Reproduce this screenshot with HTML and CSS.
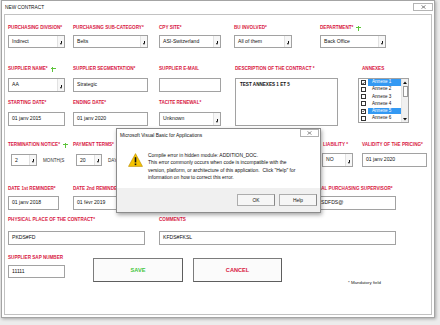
FILE: index.html
```html
<!DOCTYPE html>
<html>
<head>
<meta charset="utf-8">
<link rel="stylesheet" href="styles.css">
</head>
<body>
<div class="window">
  <div class="titlebar">
    <span class="title">NEW CONTRACT</span>
    <span class="close-btn"><svg width="5" height="4" viewBox="0 0 5 4"><path d="M0.5 0.5 L4.5 3.5 M4.5 0.5 L0.5 3.5" stroke="#555" stroke-width="0.7"/></svg></span>
  </div>
  <div class="form">
    <!-- row 1 -->
    <div class="lbl r-l1 c-a">PURCHASING DIVISION*</div>
    <div class="lbl r-l1 c-b">PURCHASING SUB-CATEGORY*</div>
    <div class="lbl r-l1 c-c">CPY SITE*</div>
    <div class="lbl r-l1 c-d nudge-l">BU INVOLVED*</div>
    <div class="lbl r-l1 c-ef">DEPARTMENT* <span class="plus"></span></div>

    <div class="ctl sel r-c1 c-a w57">Indirect<span class="arr"></span></div>
    <div class="ctl sel r-c1 c-b w75">Belts<span class="arr"></span></div>
    <div class="ctl sel r-c1 c-c w62">ASI-Switzerland<span class="arr"></span></div>
    <div class="ctl sel r-c1 c-d w58 nudge-l">All of them<span class="arr"></span></div>
    <div class="ctl sel r-c1 c-ef w66">Back Office<span class="arr"></span></div>

    <!-- row 2 -->
    <div class="lbl r-l2 c-a">SUPPLIER NAME* <span class="plus"></span></div>
    <div class="lbl r-l2 c-b">SUPPLIER SEGMENTATION*</div>
    <div class="lbl r-l2 c-c">SUPPLIER E-MAIL</div>
    <div class="lbl r-l2 c-de">DESCRIPTION OF THE CONTRACT *</div>
    <div class="lbl r-l2 c-f in4">ANNEXES</div>

    <div class="ctl sel r-c2 c-a w57">AA<span class="arr"></span></div>
    <div class="ctl r-c2 c-b w75">Strategic</div>
    <div class="ctl r-c2 c-c w62"></div>
    <div class="ctl textarea r-desc c-de">TEST ANNEXES 1 ET 5</div>
    <div class="listbox r-desc c-f">
      <div class="lb-items">
        <div class="lb-row"><span class="cbox on"><svg width="4" height="4" viewBox="0 0 4 4"><path d="M0.4 2 L1.6 3.3 L3.6 0.6" fill="none" stroke="#111" stroke-width="0.8"/></svg></span><span class="lb-text sel-row">Annexe 1</span></div>
        <div class="lb-row"><span class="cbox"></span><span class="lb-text">Annexe 2</span></div>
        <div class="lb-row"><span class="cbox"></span><span class="lb-text">Annexe 3</span></div>
        <div class="lb-row"><span class="cbox"></span><span class="lb-text">Annexe 4</span></div>
        <div class="lb-row"><span class="cbox on"><svg width="4" height="4" viewBox="0 0 4 4"><path d="M0.4 2 L1.6 3.3 L3.6 0.6" fill="none" stroke="#111" stroke-width="0.8"/></svg></span><span class="lb-text sel-row">Annexe 5</span></div>
        <div class="lb-row"><span class="cbox"></span><span class="lb-text">Annexe 6</span></div>
      </div>
      <div class="lb-scroll">
        <span class="sb-btn"><svg width="4" height="3" viewBox="0 0 4 3"><path d="M0 3 L2 0.5 L4 3 Z" fill="#111"/></svg></span>
        <span class="sb-thumb"></span>
        <span class="sb-track"></span>
        <span class="sb-btn"><svg width="4" height="3" viewBox="0 0 4 3"><path d="M0 0 L2 2.5 L4 0 Z" fill="#111"/></svg></span>
      </div>
    </div>

    <!-- row 3 -->
    <div class="lbl r-l3 c-a">STARTING DATE*</div>
    <div class="lbl r-l3 c-b">ENDING DATE*</div>
    <div class="lbl r-l3 c-c">TACITE RENEWAL*</div>

    <div class="ctl r-c3 c-a w57">01 janv 2015</div>
    <div class="ctl r-c3 c-b w75">01 janv 2020</div>
    <div class="ctl sel r-c3 c-c w62">Unknown<span class="arr"></span></div>

    <!-- row 4 -->
    <div class="lbl r-l4 c-a">TERMINATION NOTICE* <span class="plus"></span></div>
    <div class="lbl r-l4 c-b">PAYMENT TERMS*</div>
    <div class="lbl r-l4 c-e in3">LIABILITY *</div>
    <div class="lbl r-l4 c-f in4">VALIDITY OF THE PRICING*</div>

    <div class="inline-ctl r-c4 c-a">
      <div class="ctl sel small w26">2<span class="arr"></span></div>
      <span class="unit">MONTH(S</span>
    </div>
    <div class="inline-ctl r-c4 c-b">
      <div class="ctl sel small w26">20<span class="arr"></span></div>
      <span class="unit">DAYS</span>
    </div>
    <div class="ctl sel r-c4 c-e in2 w31">NO<span class="arr"></span></div>
    <div class="ctl r-c4 c-f in4 w65">01 janv 2020</div>

    <!-- row 5 -->
    <div class="lbl r-l5 c-a">DATE 1st REMINDER*</div>
    <div class="lbl r-l5 c-b">DATE 2nd REMINDER*</div>
    <div class="lbl r-l5 c-ef sup-lbl">GLOBAL PURCHASING SUPERVISOR*</div>

    <div class="ctl r-c5 c-a w51">01 janv 2018</div>
    <div class="ctl r-c5 c-b w70">01 févr 2019</div>
    <div class="ctl r-c5 c-ef sup-ctl">SDFDS@</div>

    <!-- row 6 -->
    <div class="lbl r-l6 c-ab">PHYSICAL PLACE OF THE CONTRACT*</div>
    <div class="lbl r-l6 c-c">COMMENTS</div>

    <div class="ctl r-c6 c-ab w137">PKDS#FD</div>
    <div class="ctl r-c6 c-cf w237">KFDS#FKSL</div>

    <!-- row 7 -->
    <div class="lbl r-l7 c-a">SUPPLIER SAP NUMBER</div>
    <div class="ctl r-c7 c-a w57 sap">11111</div>
    <div class="btn save c-b">SAVE</div>
    <div class="btn cancel c-c">CANCEL</div>
    <div class="mandatory c-ef">* Mandatory field</div>
  </div>

  <div class="dialog">
    <div class="dlg-title">
      <span>Microsoft Visual Basic for Applications</span>
      <span class="dlg-close"><svg width="5" height="4" viewBox="0 0 5 4"><path d="M0.5 0.5 L4.5 3.5 M4.5 0.5 L0.5 3.5" stroke="#666" stroke-width="0.7"/></svg></span>
    </div>
    <div class="dlg-body">
      <svg class="warn" width="15" height="14" viewBox="0 0 15 14">
        <path d="M7.5 0.6 L14.5 13.4 H0.5 Z" fill="#f5c400" stroke="#b88a00" stroke-width="0.6" stroke-linejoin="round"/>
        <rect x="6.7" y="4.2" width="1.6" height="5.2" fill="#111"/>
        <rect x="6.7" y="10.5" width="1.6" height="1.6" fill="#111"/>
      </svg>
      <div class="dlg-text">
        <div>Compile error in hidden module: ADDITION_DOC.</div>
        <div>This error commonly occurs when code is incompatible with the</div>
        <div>version, platform, or architecture of this application.&nbsp; Click "Help" for</div>
        <div>information on how to correct this error.</div>
      </div>
    </div>
    <div class="dlg-footer">
      <span class="dlg-btn">OK</span>
      <span class="dlg-btn">Help</span>
    </div>
  </div>
</div>
</body>
</html>
```

FILE: styles.css
```css
html, body {
  margin: 0;
  padding: 0;
}
body {
  width: 440px;
  height: 325px;
  overflow: hidden;
  background: #ececec;
  font-family: "Liberation Sans", Arial, sans-serif;
  color: #000;
}

.window {
  position: relative;
  margin-left: 1px;
  width: 434px;
  height: 318px;
  box-sizing: border-box;
  border: 1px solid #a4a4a4;
  background: #fff;
  box-shadow: 1px 1px 3px rgba(0, 0, 0, 0.3);
  display: flex;
  flex-direction: column;
}

.titlebar {
  height: 13px;
  flex: none;
  display: flex;
  align-items: center;
  justify-content: space-between;
  padding: 0 1px 0 3px;
}
.title {
  font-size: 4.8px;
  color: #111;
  line-height: 13px;
}
.close-btn {
  width: 20px;
  height: 8px;
  box-sizing: border-box;
  border: 1px solid #b4b4b4;
  background: #fff;
  display: flex;
  align-items: center;
  justify-content: center;
  margin-top: -2px;
}

.form {
  flex: 1;
  margin: 0 2px 2px 2px;
  border: 1px solid #c2c2c2;
  padding-left: 3px;
  display: grid;
  grid-template-columns: 65px 86px 76px 85px 38px 1fr;
  grid-template-rows: 9px 8px 3px 13px 17px 8px 5px 14px 7px 8px 5px 14px 15px 8px 4px 14px 18px 8px 3px 14px 6px 8px 7px 14px 9px 8px 3px 13px 1fr;
}

/* grid rows */
.r-l1 { grid-row: 2; }
.r-c1 { grid-row: 4; }
.r-l2 { grid-row: 6; }
.r-c2 { grid-row: 8; }
.r-desc { grid-row: 8 / 13; }
.r-l3 { grid-row: 10; }
.r-c3 { grid-row: 12; }
.r-l4 { grid-row: 14; }
.r-c4 { grid-row: 16; }
.r-l5 { grid-row: 18; }
.r-c5 { grid-row: 20; }
.r-l6 { grid-row: 22; }
.r-c6 { grid-row: 24; }
.r-l7 { grid-row: 26; }
.r-c7 { grid-row: 28; }

/* grid columns */
.c-a { grid-column: 1; }
.c-b { grid-column: 2; }
.c-c { grid-column: 3; }
.c-d { grid-column: 4; }
.c-e { grid-column: 5; }
.c-f { grid-column: 6; }
.c-ab { grid-column: 1 / 3; }
.c-de { grid-column: 4 / 6; }
.c-ef { grid-column: 5 / 7; }
.c-cf { grid-column: 3 / 7; }

.nudge-l { margin-left: -1px; }
.in2 { margin-left: 2px; }
.in3 { margin-left: 3px; }
.in4 { margin-left: 4px; }

.lbl {
  font-size: 4.6px;
  font-weight: bold;
  color: #d8173f;
  line-height: 8px;
  white-space: nowrap;
  align-self: center;
  display: flex;
  align-items: center;
}
.plus {
  display: inline-block;
  width: 5px;
  height: 5px;
  margin-left: 3px;
  background:
    linear-gradient(#5cc43a, #5cc43a) center / 5px 1.4px no-repeat,
    linear-gradient(#5cc43a, #5cc43a) center / 1.4px 5px no-repeat;
}

.ctl {
  position: relative;
  box-sizing: border-box;
  height: 100%;
  border: 1px solid #a2a2a2;
  background: #fff;
  font-size: 5.1px;
  line-height: 8px;
  padding: 1px 3px 0 3px;
  white-space: nowrap;
  overflow: hidden;
  color: #111;
  justify-self: start;
}
.ctl.sel { padding-right: 9px; }
.arr {
  position: absolute;
  top: 0;
  right: 0;
  bottom: 0;
  width: 6px;
  background: #f7f7f7;
  border-left: 1px solid #e2e2e2;
}
.arr::after {
  content: "";
  position: absolute;
  left: 1.5px;
  bottom: 2px;
  width: 0;
  height: 0;
  border-left: 1.5px solid transparent;
  border-right: 1.5px solid transparent;
  border-top: 2.5px solid #111;
}
.arr::before {
  content: "";
  position: absolute;
  left: 2.5px;
  bottom: 4px;
  width: 1px;
  height: 2px;
  background: #111;
}

.w26 { width: 26px; }
.w31 { width: 31px; }
.w51 { width: 51px; }
.w57 { width: 57px; }
.w58 { width: 58px; }
.w62 { width: 62px; }
.w65 { width: 65px; }
.w66 { width: 66px; }
.w70 { width: 70px; }
.w75 { width: 75px; }
.w137 { width: 137px; }
.w237 { width: 237px; }

.textarea {
  width: 103px;
  height: 48px;
  align-self: start;
  font-weight: bold;
  font-size: 4.6px;
  padding: 2px 4px;
}

.listbox {
  width: 51px;
  height: 45px;
  align-self: start;
  box-sizing: border-box;
  border: 1px solid #a2a2a2;
  background: #fff;
  display: flex;
}
.lb-items {
  flex: 1;
  display: flex;
  flex-direction: column;
}
.lb-row {
  height: 7.15px;
  display: flex;
  align-items: center;
}
.cbox {
  width: 5px;
  height: 5px;
  box-sizing: border-box;
  border: 0.8px solid #333;
  margin: 0 2px 0 2px;
  display: flex;
  align-items: center;
  justify-content: center;
  flex: none;
}
.lb-text {
  flex: 1;
  height: 6.6px;
  font-size: 4.6px;
  line-height: 6.6px;
  padding-left: 4px;
  color: #111;
  white-space: nowrap;
}
.lb-text.sel-row {
  background: #3399f3;
  color: #fff;
}
.lb-scroll {
  width: 6px;
  flex: none;
  background: #f0f0f0;
  border-left: 1px solid #e4e4e4;
  display: flex;
  flex-direction: column;
}
.sb-btn {
  height: 6px;
  display: flex;
  align-items: center;
  justify-content: center;
  flex: none;
}
.sb-thumb {
  height: 11px;
  margin: 1px 0.5px;
  box-sizing: border-box;
  border: 0.8px solid #9a9a9a;
  background: #fdfdfd;
  flex: none;
}
.sb-track { flex: 1; }

.inline-ctl {
  display: flex;
  align-items: center;
}
.inline-ctl .ctl.small {
  height: 12px;
  margin-left: 3px;
  padding-top: 1px;
}
.unit {
  font-size: 4.6px;
  color: #333;
  margin-left: 6px;
  white-space: nowrap;
}

.sup-lbl { margin-left: -12px; }
.sup-ctl {
  margin-left: -3px;
  width: 79px;
}

.sap { height: 13px; }

.btn {
  grid-row: 26 / 29;
  align-self: start;
  margin-top: 4px;
  height: 24px;
  box-sizing: border-box;
  border: 1px solid #7c7c7c;
  border-right-color: #5e5e5e;
  border-bottom-color: #5e5e5e;
  background: #fbfbfb;
  display: flex;
  align-items: center;
  justify-content: center;
  font-size: 5.6px;
  font-weight: bold;
  justify-self: start;
}
.save {
  margin-left: 20px;
  width: 90px;
  color: #3ec53a;
}
.cancel {
  margin-left: 34px;
  width: 89px;
  color: #d8173f;
}

.mandatory {
  grid-row: 29;
  margin-left: 28px;
  margin-top: 2px;
  font-size: 4.4px;
  line-height: 6px;
  color: #222;
  white-space: nowrap;
  align-self: start;
}

/* dialog overlay */
.dialog {
  position: absolute;
  left: 114px;
  top: 127px;
  width: 205px;
  height: 85px;
  box-sizing: border-box;
  border: 1px solid #8c8c8c;
  background: #fff;
  box-shadow: 1px 2px 4px rgba(0, 0, 0, 0.35);
  display: flex;
  flex-direction: column;
  z-index: 5;
}
.dlg-title {
  height: 13px;
  flex: none;
  display: flex;
  align-items: center;
  justify-content: space-between;
  padding-left: 3px;
  font-size: 4.9px;
  color: #111;
}
.dlg-close {
  align-self: flex-start;
  margin-top: 0px;
  margin-right: 1px;
  width: 19px;
  height: 8px;
  box-sizing: border-box;
  border: 1px solid #b0b0b0;
  display: flex;
  align-items: center;
  justify-content: center;
}
.dlg-body {
  flex: 1;
  margin: 0 2px;
  display: flex;
  align-items: flex-start;
  padding: 10px 0 0 9px;
}
.warn {
  flex: none;
  margin-top: 1px;
}
.dlg-text {
  margin-left: 5px;
  font-size: 4.95px;
  line-height: 7.3px;
  white-space: nowrap;
  color: #111;
}
.dlg-footer {
  height: 24px;
  flex: none;
  background: #f0f0f0;
  display: flex;
  align-items: center;
  justify-content: flex-end;
  gap: 4px;
  padding-right: 3px;
}
.dlg-btn {
  width: 38px;
  height: 12px;
  box-sizing: border-box;
  border: 1px solid #adadad;
  border-right-color: #888;
  background: #f6f6f6;
  font-size: 4.9px;
  display: flex;
  align-items: center;
  justify-content: center;
  color: #111;
}
```
